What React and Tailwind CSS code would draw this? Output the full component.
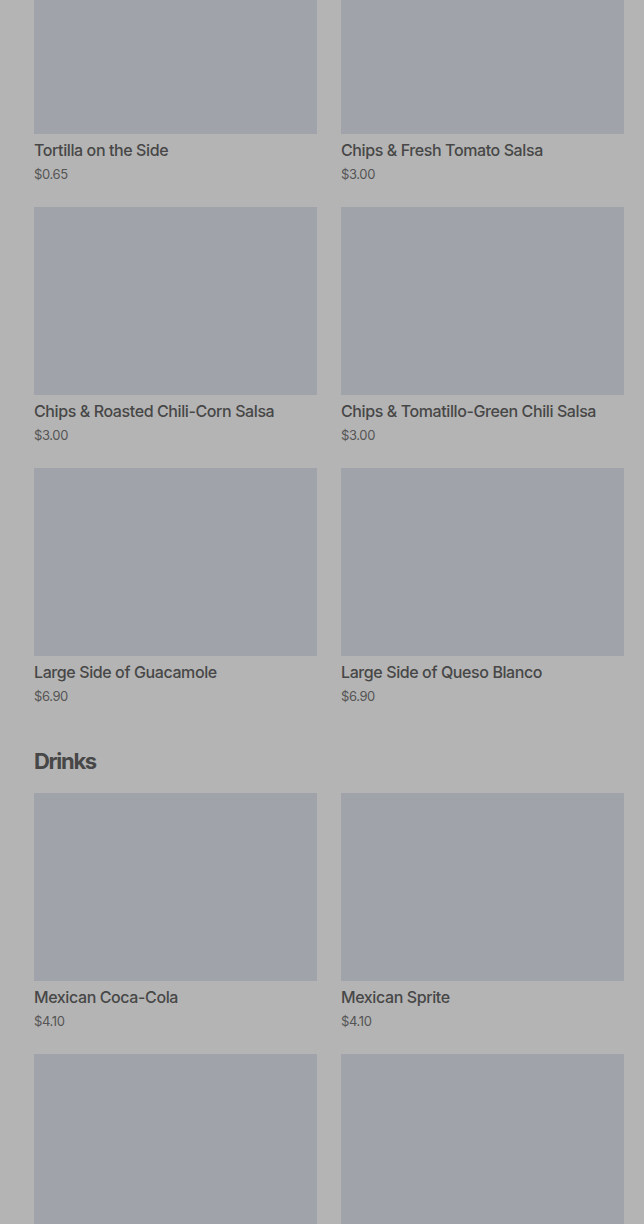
const SIDES = [
  { name: "Tortilla on the Side", price: "$0.65" },
  { name: "Chips & Fresh Tomato Salsa", price: "$3.00" },
  { name: "Chips & Roasted Chili-Corn Salsa", price: "$3.00" },
  { name: "Chips & Tomatillo-Green Chili Salsa", price: "$3.00" },
  { name: "Large Side of Guacamole", price: "$6.90" },
  { name: "Large Side of Queso Blanco", price: "$6.90" },
];

const DRINKS = [
  { name: "Mexican Coca-Cola", price: "$4.10" },
  { name: "Mexican Sprite", price: "$4.10" },
];

function ItemCard({ item }) {
  return (
    <div className="flex flex-col">
      <div className="h-[188px] w-full bg-[#a0a3aa]" />
      <p className="mt-[4px] text-[16px] leading-6 font-medium text-[#474747] tracking-[-0.025em]">{item.name}</p>
      <p className="mt-0.5 text-[13px] leading-5 text-[#555555] tracking-[-0.03em]">{item.price}</p>
    </div>
  );
}

export default function App() {
  return (
    <div className="h-screen overflow-hidden bg-[#b4b4b4]" style={{ fontFamily: "Inter, 'Liberation Sans', sans-serif" }}>
      <div className="-mt-[54px] pl-[34px] pr-[20px]">
        {/* Sides */}
        <div className="grid grid-cols-2 gap-x-6 gap-y-[23px]">
          {SIDES.map((it) => (
            <ItemCard key={it.name} item={it} />
          ))}
        </div>

        {/* Drinks */}
        <h2 className="mt-[39px] mb-4 text-[22px] leading-8 font-bold tracking-[-0.06em] text-[#474747]">Drinks</h2>
        <div className="grid grid-cols-2 gap-x-6 gap-y-[23px]">
          {DRINKS.map((it) => (
            <ItemCard key={it.name} item={it} />
          ))}
          {/* next row, only the pictures are in view */}
          <div className="h-[188px] w-full bg-[#a0a3aa]" />
          <div className="h-[188px] w-full bg-[#a0a3aa]" />
        </div>
      </div>
    </div>
  );
}
